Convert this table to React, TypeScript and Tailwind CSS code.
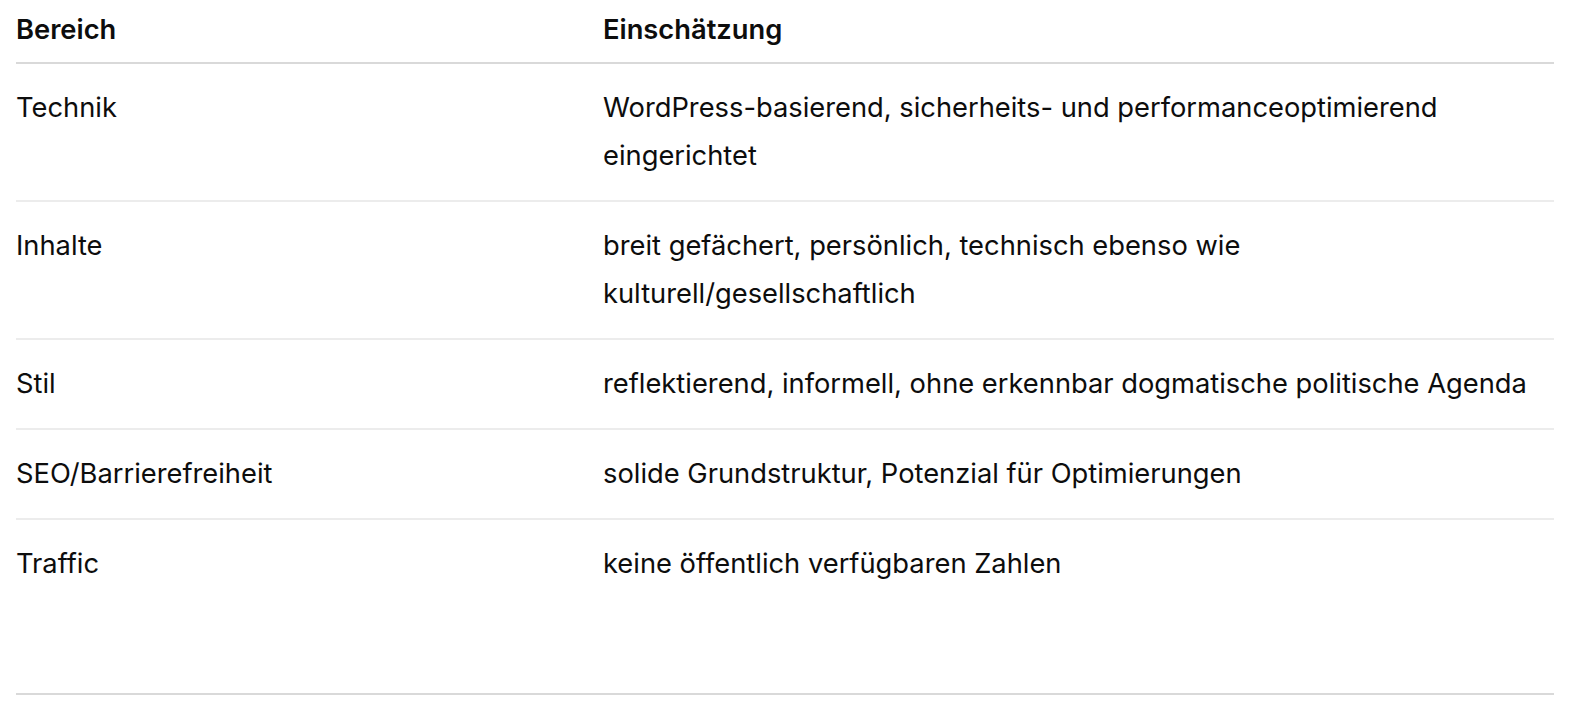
import React from "react";

const rows: [string, string][] = [
  ["Technik", "WordPress-basierend, sicherheits- und performanceoptimierend eingerichtet"],
  ["Inhalte", "breit gefächert, persönlich, technisch ebenso wie kulturell/gesellschaftlich"],
  ["Stil", "reflektierend, informell, ohne erkennbar dogmatische politische Agenda"],
  ["SEO/Barrierefreiheit", "solide Grundstruktur, Potenzial für Optimierungen"],
  ["Traffic", "keine öffentlich verfügbaren Zahlen"],
];

export default function App() {
  return (
    <div
      className="w-[1570px] h-[722px] bg-white text-[#0d0d0d] px-4 overflow-hidden"
      style={{ fontFamily: "Inter, 'Noto Sans', sans-serif" }}
    >
      <table className="w-full border-collapse text-[27.3px] leading-[48px]">
        <colgroup>
          <col className="w-[587px]" />
          <col />
        </colgroup>
        <thead>
          <tr className="border-b-2 border-[#d9d9d9]">
            <th className="text-left font-semibold pt-[6px] pb-[8px] pr-4 align-top">Bereich</th>
            <th className="text-left font-semibold pt-[6px] pb-[8px] align-top">Einschätzung</th>
          </tr>
        </thead>
        <tbody>
          {rows.map(([a, b], i) => (
            <tr
              key={a}
              className={i < rows.length - 1 ? "border-b-2 border-[#ececec]" : ""}
            >
              <td className="py-5 pr-4 align-top font-normal">{a}</td>
              <td className="py-5 pr-6 align-top font-normal">{b}</td>
            </tr>
          ))}
        </tbody>
      </table>
      <div className="mt-[85px] h-[2px] bg-[#d9d9d9]" />
    </div>
  );
}
